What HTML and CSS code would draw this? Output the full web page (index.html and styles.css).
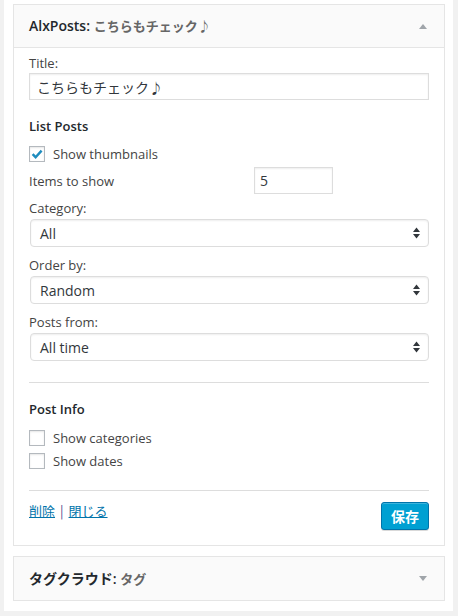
FILE: index.html
```html
<!DOCTYPE html>
<html lang="ja">
<head>
<meta charset="utf-8">
<title>Widgets</title>
<link rel="stylesheet" href="styles.css">
</head>
<body>
<div class="panel">
  <div class="widget">
    <div class="widget-top">
      <h3 class="widget-title">AlxPosts: <span class="in-title">こちらもチェック♪</span></h3>
      <svg class="toggle" width="8" height="5" viewBox="0 0 8 5"><path d="M0 5 L4 0 L8 5 Z" fill="#a0a5aa"/></svg>
    </div>
    <div class="widget-inside">
      <label class="lbl first">Title:</label>
      <div class="text-input title-input">こちらもチェック♪</div>

      <h4 class="section">List Posts</h4>
      <div class="check-row first-check">
        <span class="checkbox checked"><svg width="14" height="14" viewBox="0 0 14 14"><path d="M2.6 7.2 L5.6 10.2 L11.6 3.6" fill="none" stroke="#1e8cbe" stroke-width="2.4"/></svg></span>
        <span class="check-label">Show thumbnails</span>
      </div>
      <div class="items-row">
        <span class="items-label">Items to show</span>
        <div class="text-input num-input">5</div>
      </div>

      <label class="lbl cat">Category:</label>
      <div class="select"><span>All</span><svg width="7" height="12" viewBox="0 0 7 12"><path d="M0 5 L3.5 0.5 L7 5 Z M0 7 L3.5 11.5 L7 7 Z" fill="#32373c"/></svg></div>

      <label class="lbl next">Order by:</label>
      <div class="select"><span>Random</span><svg width="7" height="12" viewBox="0 0 7 12"><path d="M0 5 L3.5 0.5 L7 5 Z M0 7 L3.5 11.5 L7 7 Z" fill="#32373c"/></svg></div>

      <label class="lbl next">Posts from:</label>
      <div class="select"><span>All time</span><svg width="7" height="12" viewBox="0 0 7 12"><path d="M0 5 L3.5 0.5 L7 5 Z M0 7 L3.5 11.5 L7 7 Z" fill="#32373c"/></svg></div>

      <hr class="rule rule-1">

      <h4 class="section">Post Info</h4>
      <div class="check-row info-check">
        <span class="checkbox"></span>
        <span class="check-label">Show categories</span>
      </div>
      <div class="check-row second-check">
        <span class="checkbox"></span>
        <span class="check-label">Show dates</span>
      </div>

      <hr class="rule rule-2">

      <div class="widget-control">
        <div class="links"><a href="#">削除</a><span class="sep">|</span><a href="#">閉じる</a></div>
        <button class="btn-primary" type="button">保存</button>
      </div>
    </div>
  </div>

  <div class="widget closed">
    <div class="widget-top">
      <h3 class="widget-title">タグクラウド: <span class="in-title">タグ</span></h3>
      <svg class="toggle" width="8" height="5" viewBox="0 0 8 5"><path d="M0 0 L4 5 L8 0 Z" fill="#a0a5aa"/></svg>
    </div>
  </div>
</div>
</body>
</html>
```

FILE: styles.css
```css
* { box-sizing: border-box; }

html, body {
  margin: 0;
  padding: 0;
  background: #f1f1f1;
  height: 616px;
  overflow: hidden;
}

body {
  font-family: "Open Sans", "Noto Sans CJK JP", sans-serif;
  font-size: 13px;
  color: #444;
}

.panel {
  margin-left: 4px;
  width: 449px;
  background: #fff;
  padding: 4px 8px 10px 9px;
}

.widget {
  border: 1px solid #e5e5e5;
  background: #fff;
}

.widget.closed {
  margin-top: 10px;
}

.widget-top {
  height: 43px;
  background: #fafafa;
  display: flex;
  align-items: center;
  justify-content: space-between;
  padding: 0 17px 0 15px;
}

.widget .widget-top {
  border-bottom: 1px solid #e5e5e5;
}

.widget.closed .widget-top {
  border-bottom: none;
}

.widget-title {
  margin: 0;
  font-size: 14px;
  font-weight: 600;
  color: #23282d;
  line-height: 18px;
}

.in-title {
  color: #666;
  font-family: "Noto Sans CJK JP", sans-serif;
  font-weight: 700;
  font-size: 13px;
}

.toggle { display: block; }

.widget-inside {
  padding: 6px 15px 15px;
}

.lbl {
  display: block;
  line-height: 18px;
  height: 18px;
  color: #444;
}

.lbl.cat { margin-top: 5px; }
.lbl.next { margin-top: 9px; }

.text-input {
  border: 1px solid #ddd;
  box-shadow: inset 0 1px 2px rgba(0, 0, 0, 0.07);
  background: #fff;
  color: #32373c;
  display: flex;
  align-items: center;
}

.title-input {
  margin-top: 1px;
  height: 27px;
  padding-left: 7px;
  font-family: "Noto Sans CJK JP", sans-serif;
  font-size: 14px;
}

.section {
  margin: 17px 0 0;
  font-size: 13px;
  font-weight: 600;
  line-height: 18px;
  color: #23282d;
}

.check-row {
  display: flex;
  align-items: center;
  height: 20px;
}

.first-check { margin-top: 9px; }
.info-check { margin-top: 10px; }
.second-check { margin-top: 3px; }

.checkbox {
  width: 16px;
  height: 16px;
  border: 1px solid #b4b9be;
  box-shadow: inset 0 1px 2px rgba(0, 0, 0, 0.1);
  background: #fff;
  display: flex;
  align-items: center;
  justify-content: center;
  margin-right: 8px;
  flex: none;
}

.check-label {
  line-height: 18px;
  color: #444;
}

.items-row {
  margin-top: 3px;
  display: flex;
  align-items: center;
  height: 27px;
}

.items-label {
  width: 225px;
}

.num-input {
  width: 79px;
  height: 27px;
  padding-left: 5px;
  font-size: 14px;
}

.select {
  margin-top: 2px;
  height: 28px;
  margin-left: 1px;
  border: 1px solid #ddd;
  border-radius: 4px;
  box-shadow: inset 0 1px 2px rgba(0, 0, 0, 0.07);
  display: flex;
  align-items: center;
  justify-content: space-between;
  padding: 0 8px 0 9px;
  font-size: 14px;
  color: #32373c;
}

.select svg { display: block; }

.rule {
  border: none;
  border-top: 1px solid #ddd;
  height: 0;
  margin: 0;
}

.rule-1 { margin-top: 21px; }
.rule-2 { margin-top: 19px; }

.widget-control {
  margin-top: 11px;
  display: flex;
  justify-content: space-between;
  align-items: flex-start;
}

.links {
  line-height: 18px;
  font-family: "Noto Sans CJK JP", sans-serif;
  font-size: 13px;
  display: flex;
}

.links a {
  color: #0073aa;
  text-decoration: underline;
}

.sep {
  color: #5b4a8c;
  margin: 0 5px;
}

.btn-primary {
  height: 28px;
  width: 48px;
  padding: 0;
  border: 1px solid #0073aa;
  border-radius: 3px;
  background: #00a0d2;
  box-shadow: inset 0 1px 0 rgba(120, 200, 230, 0.5), 0 1px 0 rgba(0, 0, 0, 0.15);
  color: #fff;
  font-family: "Noto Sans CJK JP", sans-serif;
  font-size: 14px;
  font-weight: 700;
  line-height: 26px;
}
```
